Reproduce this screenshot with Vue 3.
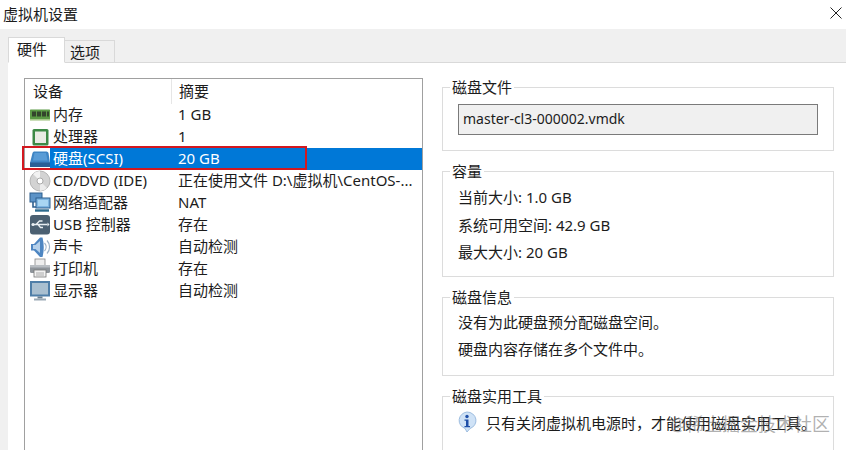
<script setup>
const devices = [
  { icon: 'mem', name: '内存', summary: '1 GB' },
  { icon: 'cpu', name: '处理器', summary: '1' },
  { icon: 'hdd', name: '硬盘(SCSI)', summary: '20 GB', selected: true },
  { icon: 'cd', name: 'CD/DVD (IDE)', summary: '正在使用文件 D:\\虚拟机\\CentOS-...' },
  { icon: 'net', name: '网络适配器', summary: 'NAT' },
  { icon: 'usb', name: 'USB 控制器', summary: '存在' },
  { icon: 'snd', name: '声卡', summary: '自动检测' },
  { icon: 'prn', name: '打印机', summary: '存在' },
  { icon: 'mon', name: '显示器', summary: '自动检测' },
]
</script>

<template>
  <div class="win">
    <header class="titlebar">
      <span class="title">虚拟机设置</span>
      <svg class="close" width="12" height="12" viewBox="0 0 12 12"><path d="M.5.5l11 11M11.5.5l-11 11" stroke="#222" stroke-width="1" fill="none"/></svg>
    </header>
    <div class="tabs">
      <div class="tab active">硬件</div>
      <div class="tab">选项</div>
    </div>
    <main class="body">
      <section class="list">
        <div class="row head">
          <div class="c1 hd">设备</div>
          <div class="c2 hd">摘要</div>
        </div>
        <div v-for="d in devices" :key="d.name" class="row" :class="{ sel: d.selected }">
          <div class="ic">
            <svg width="22" height="22" viewBox="0 0 22 22">
              <g v-if="d.icon === 'mem'">
                <rect x="1" y="5.500" width="20" height="9.500" rx=".5" fill="#5b9a45"/>
                <rect x="1" y="15" width="20" height="1.600" fill="#a8c98c"/>
                <rect x="3" y="7.500" width="4" height="5" fill="#33452c"/>
                <rect x="8" y="7.500" width="4" height="5" fill="#33452c"/>
                <rect x="13" y="7.500" width="4" height="5" fill="#33452c"/>
                <rect x="18" y="7.500" width="2" height="5" fill="#33452c"/>
              </g>
              <g v-else-if="d.icon === 'cpu'">
                <rect x="3.500" y="3" width="16" height="16.500" rx="1.500" fill="#3d8a46"/>
                <rect x="6" y="5.500" width="11" height="11.500" fill="#e9ece4"/>
              </g>
              <g v-else-if="d.icon === 'hdd'">
                <path d="M5 3.500h12.500q1.500 0 2 1.500l1.500 10v3.500H1V15l2.500-10q.5-1.500 1.500-1.500z" fill="#3f85c4"/>
                <path d="M1 14.500h20v4q0 .5-.5.5h-19q-.5 0-.5-.5z" fill="#2a5f96"/>
                <path d="M5.500 5h11.500l1.500 7.500H4z" fill="#5a9cd6"/>
              </g>
              <g v-else-if="d.icon === 'cd'">
                <circle cx="11" cy="11" r="10" fill="#d3d3d3" stroke="#a8a8a8" stroke-width=".8"/>
                <path d="M11 11L4 4a10 10 0 0 1 7-3z" fill="#f2f2f2"/>
                <path d="M11 11l7 7a10 10 0 0 1-7 3z" fill="#ececec"/>
                <circle cx="11" cy="11" r="3" fill="#fff" stroke="#999" stroke-width=".8"/>
              </g>
              <g v-else-if="d.icon === 'net'">
                <rect x="1" y="1" width="12" height="9" fill="#5c93c7" stroke="#2d5f8e"/>
                <path d="M4 10v5h5" stroke="#2d5f8e" stroke-width="1.600" fill="none"/>
                <rect x="7" y="6" width="14" height="10" fill="#7fb6e2" stroke="#2d5f8e"/>
                <rect x="9" y="8" width="10" height="6" fill="#a9d6f3"/>
                <path d="M6 18.500h14" stroke="#2d6b8e" stroke-width="2.400"/>
              </g>
              <g v-else-if="d.icon === 'usb'">
                <rect x="1" y="1" width="20" height="19.500" rx="3" fill="#4b6072"/>
                <path d="M3.500 10.500h15M7 10.500l3.500-3.500h3M9 10.500l2.500 3h2.500" stroke="#e8eef2" stroke-width="1.300" fill="none"/>
                <path d="M18.500 8.500l2 2-2 2z" fill="#e8eef2"/>
                <circle cx="4" cy="10.500" r="1.600" fill="#e8eef2"/>
              </g>
              <g v-else-if="d.icon === 'snd'">
                <path d="M2 8h3l6-6.500h2.500q2.500 9.500 0 19.500H11l-6-6.500H2z" fill="#4e86c2"/>
                <path d="M4 9h2.500L11 5v12l-4.500-4H4z" fill="#b5d0ea"/>
                <path d="M15.500 7a6 6 0 0 1 0 8M18 4.500a9.500 9.500 0 0 1 0 13" stroke="#9ab0c6" stroke-width="1.200" fill="none"/>
              </g>
              <g v-else-if="d.icon === 'prn'">
                <rect x="6" y="1" width="10" height="7" fill="#eee" stroke="#888" stroke-width=".8"/>
                <rect x="1" y="7" width="20" height="8" rx="1.500" fill="#8f959b"/>
                <rect x="1" y="7" width="20" height="2.500" fill="#b9bec3"/>
                <rect x="5" y="12" width="12" height="7" fill="#f2f2f2" stroke="#777" stroke-width=".8"/>
                <path d="M7 15h8M7 17h8" stroke="#999" stroke-width=".8"/>
              </g>
              <g v-else-if="d.icon === 'mon'">
                <rect x="1" y="1" width="20" height="15.500" fill="#4f7ea8"/>
                <rect x="3" y="3" width="16" height="11.500" fill="#a9bfd0"/>
                <path d="M8.500 16.500h5v2h-5z" fill="#6a7f90"/>
                <path d="M5 18.500h12v2H5z" fill="#9aa9b5"/>
              </g>
            </svg>
          </div>
          <div class="c1">{{ d.name }}</div>
          <div class="c2">{{ d.summary }}</div>
        </div>
        <div class="marker"></div>
      </section>
      <aside class="side">
        <fieldset class="group g1">
          <legend>磁盘文件</legend>
          <div class="file">master-cl3-000002.vmdk</div>
        </fieldset>
        <fieldset class="group g2">
          <legend>容量</legend>
          <p>当前大小: 1.0 GB</p>
          <p>系统可用空间: 42.9 GB</p>
          <p>最大大小: 20 GB</p>
        </fieldset>
        <fieldset class="group g3">
          <legend>磁盘信息</legend>
          <p>没有为此硬盘预分配磁盘空间。</p>
          <p>硬盘内容存储在多个文件中。</p>
        </fieldset>
        <fieldset class="group g4">
          <legend>磁盘实用工具</legend>
          <div class="tip">
            <svg width="20" height="22" viewBox="0 0 20 22">
              <path d="M10 1a9 8.500 0 0 1 3 16.500L10 21l-2-3.600A9 8.500 0 0 1 10 1z" fill="#cfe2f6" stroke="#9dbde0"/>
              <circle cx="10" cy="5.500" r="1.700" fill="#1f4fa8"/>
              <path d="M7.500 8.500h4V15h1.500v1.200H7.500V15H9V9.700H7.500z" fill="#1f4fa8"/>
            </svg>
            <span>只有关闭虚拟机电源时，才能使用磁盘实用工具。</span>
          </div>
        </fieldset>
      </aside>
      <div class="watermark">@稀土掘金技术社区</div>
    </main>
  </div>
</template>

<style scoped>
.win {
  width: 846px;
  height: 450px;
  overflow: hidden;
  position: relative;
  background: #f0f0f0;
  display: flex;
  flex-direction: column;
  font-family: "Noto Sans", "Noto Sans CJK SC", sans-serif;
  font-size: 15px;
  color: #1c1c1c;
}
.titlebar {
  height: 29px;
  flex: none;
  background: #fff;
  display: flex;
  align-items: center;
  justify-content: space-between;
  padding: 0 3px 0 3px;
  box-sizing: border-box;
}
.title { margin-top: -3px; }
.close { margin-right: 1px; margin-top: -3px; }
.tabs {
  height: 34px;
  flex: none;
  box-sizing: border-box;
  padding: 9px 0 0 8px;
  display: flex;
  align-items: flex-end;
}
.tab {
  width: 50px;
  height: 23px;
  box-sizing: border-box;
  border: 1px solid #d9d9d9;
  border-left: 0;
  background: #f0f0f0;
  text-align: center;
  padding-right: 9px;
  line-height: 22px;
}
.tab.active {
  width: 57px;
  height: 26px;
  background: #fff;
  border-left: 1px solid #d9d9d9;
  border-bottom-color: #fff;
  line-height: 22px;
  position: relative;
  z-index: 1;
}
.body {
  flex: 1;
  min-height: 0;
  margin-left: 8px;
  margin-top: -1px;
  background: #fff;
  border-top: 1px solid #d9d9d9;
  box-sizing: border-box;
  display: flex;
  align-items: flex-start;
  padding: 15px 13px 0 16px;
  position: relative;
}
.list {
  width: 399px;
  height: 400px;
  flex: none;
  box-sizing: border-box;
  border: 1px solid #a0a0a0;
  position: relative;
}
.row {
  display: grid;
  grid-template-columns: 25px 121px 1fr;
  height: 22px;
  line-height: 20px;
  white-space: nowrap;
}
.row.head {
  grid-template-columns: 146px 1fr;
  height: 25px;
  line-height: 24px;
}
.hd { padding-left: 8px; }
.c2 { padding-left: 7px; position: relative; }
.hd.c2 { padding-left: 7px; border-left: 1px solid #e6e6e6; }
.c1:not(.hd) { padding-left: 3px; }
.ic { display: flex; align-items: center; padding-left: 4px; margin-right: -1px; }
.sel .c1, .sel .c2 { background: #0078d7; color: #fff; }
.marker {
  position: absolute;
  left: -3px;
  top: 67px;
  width: 285px;
  height: 24px;
  box-sizing: border-box;
  border: 2px solid #d3181f;
  pointer-events: none;
}
.side {
  margin-left: 19px;
  width: 392px;
  flex: none;
  display: flex;
  flex-direction: column;
}
.group {
  margin: 0 0 20px;
  padding: 0;
  border: 1px solid #dcdcdc;
  box-sizing: border-box;
  min-width: 0;
}
.group legend {
  margin-left: 7px;
  padding: 0 2px;
  line-height: 20px;
}
.g1 { height: 74px; margin-top: -1px; }
.g2 { height: 116px; margin-top: -10px; }
.g3 { height: 89px; margin-top: -10px; }
.g4 { height: 90px; margin-top: -10px; }
.group p { margin: 0 15px; }
.g2 p { line-height: 27.500px; }
.g2 p:first-of-type { margin-top: 3px; }
.g3 p { line-height: 27px; }
.g3 p:first-of-type { margin-top: 2px; }
.file {
  margin: 7px 15px 0;
  height: 31px;
  box-sizing: border-box;
  border: 1px solid #7a7a7a;
  background: #f0f0f0;
  padding-left: 4px;
  font-size: 14px;
  line-height: 28px;
}
.tip { display: flex; align-items: center; gap: 9px; margin: 5px 0 0 14px; }
.watermark {
  position: absolute;
  right: 16px;
  bottom: 13px;
  font-size: 18px;
  line-height: 25px;
  color: rgba(110, 110, 110, .55);
  pointer-events: none;
  white-space: nowrap;
}
</style>
